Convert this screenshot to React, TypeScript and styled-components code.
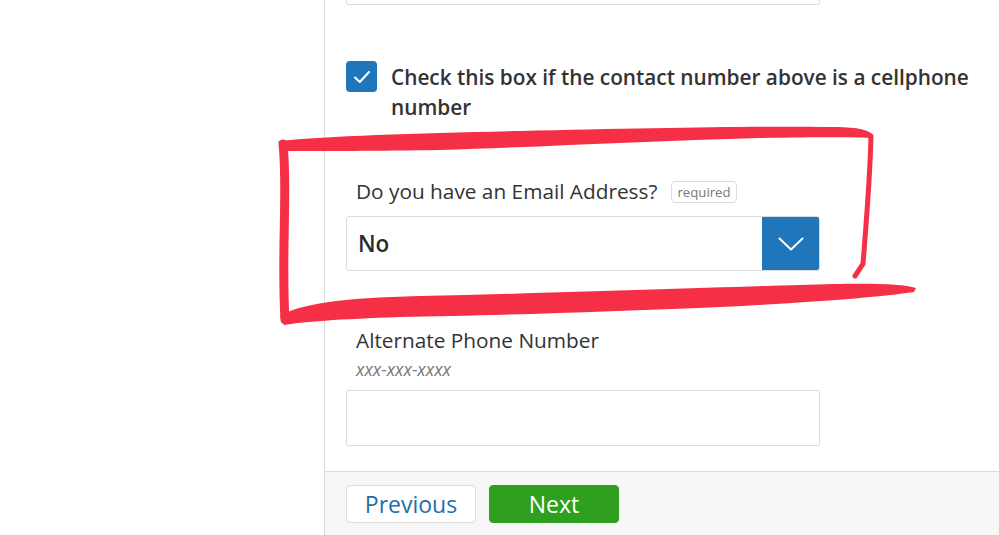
import React from 'react'
import styled, { createGlobalStyle } from 'styled-components'

const GlobalStyle = createGlobalStyle`
  html, body {
    margin: 0;
    padding: 0;
    background: #fff;
    font-family: "Open Sans", "Liberation Sans", sans-serif;
    color: #333;
  }
  * { box-sizing: border-box; }
`

const Page = styled.div`
  position: relative;
  display: flex;
  width: 999px;
  height: 535px;
  overflow: hidden;
`

const Aside = styled.div`
  width: 325px;
  flex-shrink: 0;
  border-right: 1px solid #dcdcdc;
`

const Panel = styled.div`
  flex: 1;
  display: flex;
  flex-direction: column;
`

const Form = styled.div`
  flex: 1;
  padding-left: 21px;
  display: flex;
  flex-direction: column;
`

const TextInput = styled.div<{ $top?: number }>`
  width: 474px;
  height: 56px;
  border: 1px solid #dcdcdc;
  border-radius: 2px;
  background: #fff;
  margin-top: ${p => p.$top ?? 0}px;
`

const CheckRow = styled.label`
  display: flex;
  align-items: flex-start;
  gap: 14px;
  margin-top: 56px;
`

const CheckBox = styled.span`
  width: 31px;
  height: 31px;
  flex-shrink: 0;
  border-radius: 4px;
  background: #1f76ba;
  display: flex;
  align-items: center;
  justify-content: center;
`

const CheckText = styled.span`
  font-size: 20.8px;
  font-weight: 600;
  line-height: 30px;
  color: #333;
  margin-top: 1px;
  width: 600px;
`

const Label = styled.div<{ $top: number }>`
  display: flex;
  align-items: center;
  gap: 14px;
  padding-left: 10px;
  margin-top: ${p => p.$top}px;
  font-size: 20.8px;
  line-height: 26px;
  color: #333;
`

const Required = styled.span`
  font-size: 13.2px;
  line-height: 20px;
  padding: 0 5px;
  margin-top: 2px;
  color: #777;
  border: 1px solid #dcdcdc;
  border-radius: 4px;
`

const Hint = styled.div`
  padding-left: 10px;
  margin-top: 5px;
  font-size: 17.5px;
  font-style: italic;
  line-height: 22px;
  color: #777;
`

const Select = styled.div`
  display: flex;
  width: 474px;
  height: 55px;
  margin-top: 12px;
  border: 1px solid #dcdcdc;
  border-radius: 3px;
  overflow: hidden;
`

const SelectValue = styled.span`
  flex: 1;
  padding-left: 11px;
  display: flex;
  align-items: center;
  font-size: 22.5px;
  font-weight: 600;
  color: #2b2b2b;
`

const SelectButton = styled.span`
  width: 57px;
  background: #1f76ba;
  display: flex;
  align-items: center;
  justify-content: center;
`

const Footer = styled.div`
  height: 64px;
  border-top: 1px solid #dcdcdc;
  background: #f7f7f7;
  display: flex;
  align-items: flex-start;
  gap: 13px;
  padding: 13px 0 0 21px;
`

const Button = styled.button<{ $primary?: boolean }>`
  width: 130px;
  height: 38px;
  border-radius: 4px;
  font-family: inherit;
  font-size: 23px;
  line-height: 1;
  cursor: pointer;
  border: 1px solid ${p => (p.$primary ? '#2e9f1e' : '#dcdcdc')};
  background: ${p => (p.$primary ? '#2e9f1e' : '#fff')};
  color: ${p => (p.$primary ? '#fff' : '#1f6fa8')};
`

const Scribble = styled.svg`
  position: absolute;
  left: 0;
  top: 0;
  pointer-events: none;
`

const ink = '#f52f45'

const App: React.FC = () => (
  <Page>
    <GlobalStyle />
    <Aside />
    <Panel>
      <Form>
        <TextInput $top={-51} />
        <CheckRow>
          <CheckBox>
            <svg width="18" height="14" viewBox="0 0 18 14" fill="none">
              <path d="M2 7.5 L6.8 12 L16 2" stroke="#fff" strokeWidth="2" strokeLinecap="round" strokeLinejoin="round" />
            </svg>
          </CheckBox>
          <CheckText>Check this box if the contact number above is a cellphone number</CheckText>
        </CheckRow>
        <Label $top={56}>
          Do you have an Email Address?
          <Required>required</Required>
        </Label>
        <Select>
          <SelectValue>No</SelectValue>
          <SelectButton>
            <svg width="26" height="14" viewBox="0 0 26 14" fill="none">
              <path d="M1.5 1.5 L13 12.5 L24.5 1.5" stroke="#fff" strokeWidth="2" strokeLinecap="round" strokeLinejoin="round" />
            </svg>
          </SelectButton>
        </Select>
        <Label $top={56}>Alternate Phone Number</Label>
        <Hint>xxx-xxx-xxxx</Hint>
        <TextInput $top={10} />
      </Form>
      <Footer>
        <Button>Previous</Button>
        <Button $primary>Next</Button>
      </Footer>
    </Panel>
    <Scribble width="999" height="535" viewBox="0 0 999 535">
      <path
        d="M278 141 C 330 136 420 133 520 131 C 650 128 760 126 830 127 C 850 127 866 128 872 134 L 870 138 C 850 137 820 137 760 138 C 650 141 540 147 440 150 C 380 151 320 151 286 151 Z"
        fill={ink}
      />
      <path d="M283 144 C 288 190 281 250 285 320" stroke={ink} strokeWidth="9" strokeLinecap="round" fill="none" />
      <path d="M871 136 C 870 180 866 225 863 264 L 855 276" stroke={ink} strokeWidth="5" strokeLinecap="round" fill="none" />
      <path
        d="M280 316 C 300 304 340 298 420 296 C 560 293 700 288 800 285 C 860 283 900 283 916 288 L 914 292 C 880 297 820 302 720 307 C 600 312 480 316 400 317 C 340 319 300 322 284 325 Z"
        fill={ink}
      />
    </Scribble>
  </Page>
)

export default App
